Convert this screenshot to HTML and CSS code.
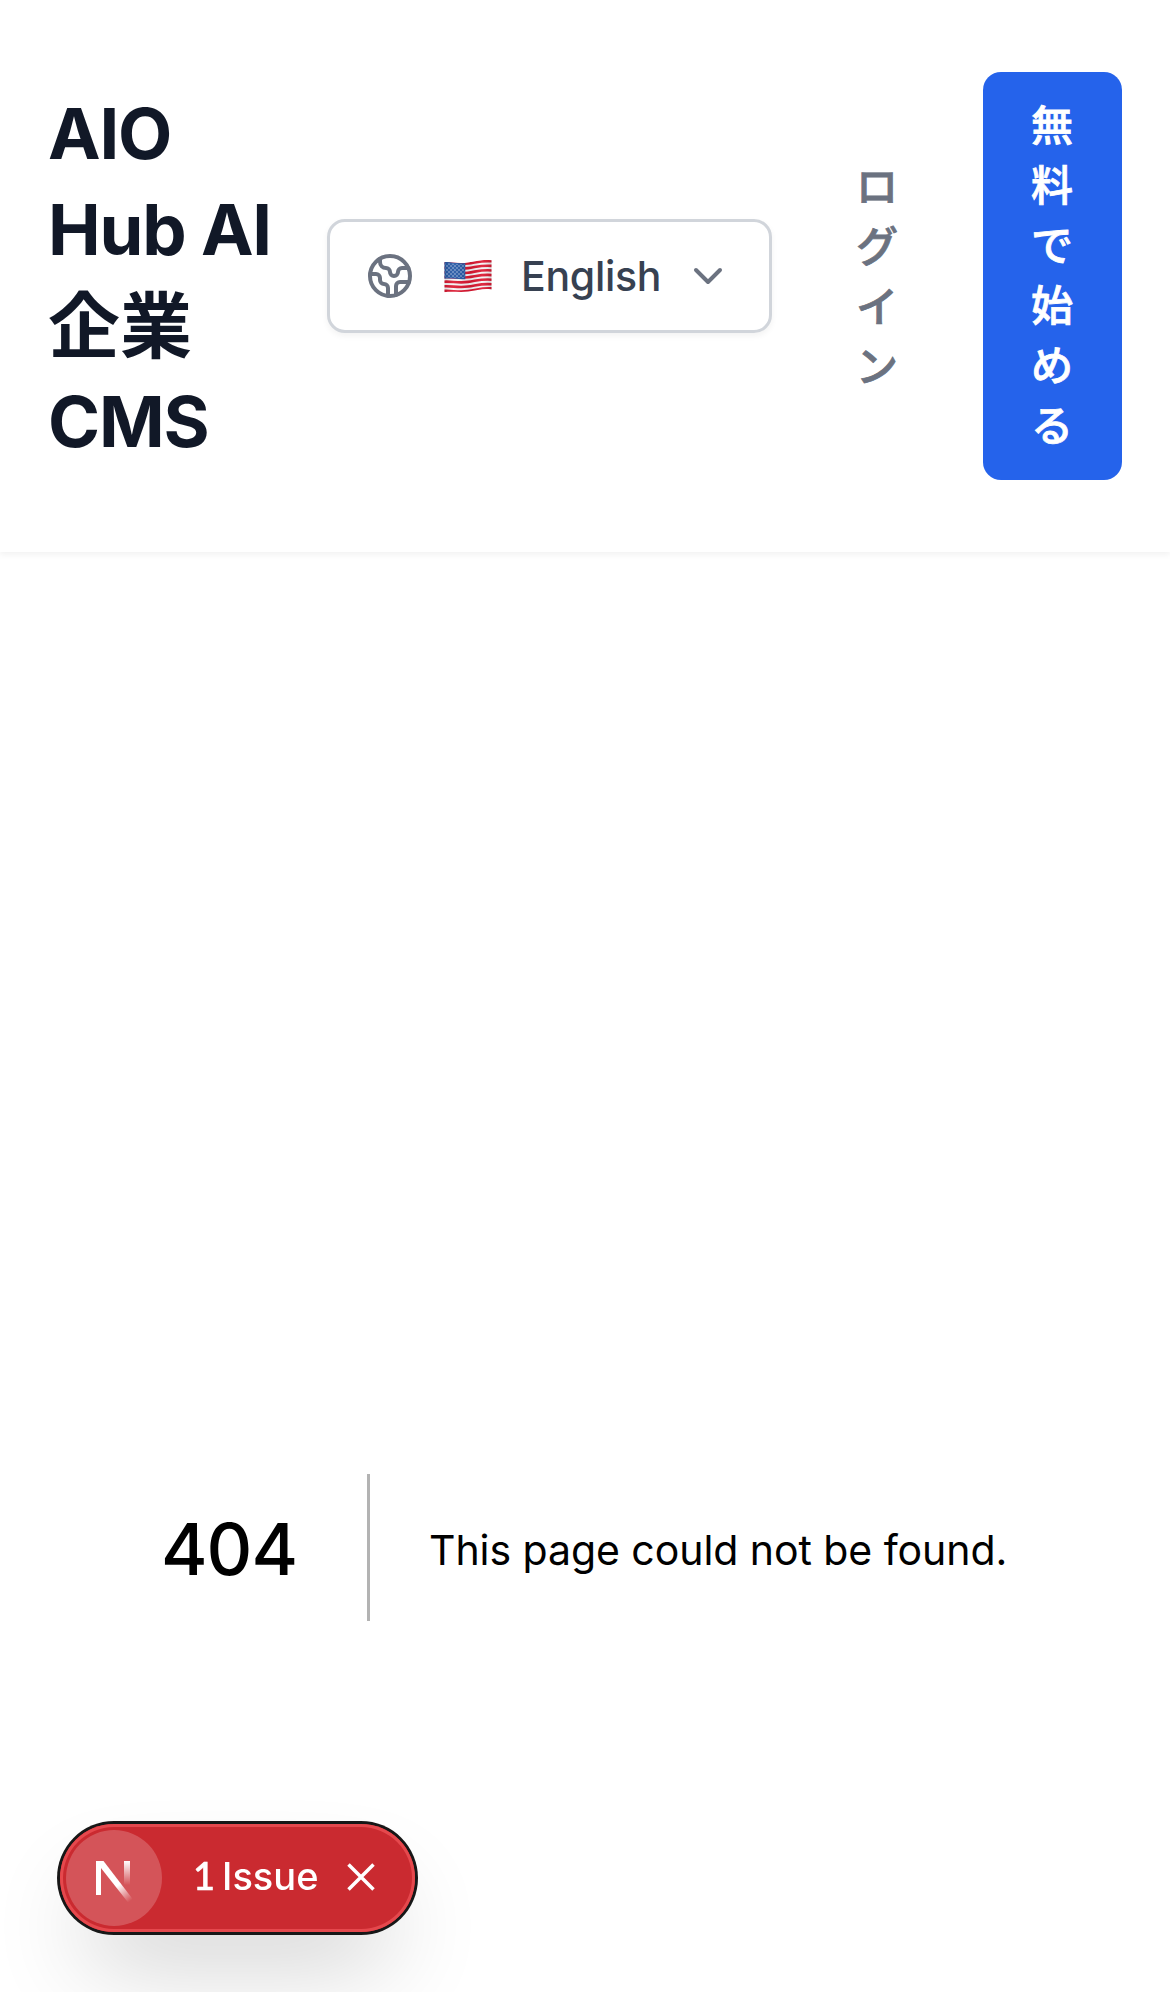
FILE: index.html
```html
<!DOCTYPE html>
<html lang="ja">
<head>
<meta charset="utf-8">
<title>AIO Hub AI企業CMS</title>
<link rel="stylesheet" href="styles.css">
</head>
<body>
<header class="header">
  <h1 class="brand">AIO<br>Hub AI<br><span class="brand-ja">企業</span><br>CMS</h1>
  <button class="language" type="button">
    <svg class="icon" viewBox="0 0 24 24" aria-hidden="true">
      <path d="M21.54 15H17a2 2 0 0 0-2 2v4.54"/>
      <path d="M7 3.34V5a3 3 0 0 0 3 3a2 2 0 0 1 2 2c0 1.1.9 2 2 2a2 2 0 0 0 2-2c0-1.1.9-2 2-2h3.17"/>
      <path d="M11 21.95V18a2 2 0 0 0-2-2a2 2 0 0 1-2-2v-1a2 2 0 0 0-2-2H2.05"/>
      <circle cx="12" cy="12" r="10"/>
    </svg>
    <svg class="flag" viewBox="0 0 48 34" aria-hidden="true">
      <defs>
        <clipPath id="wave"><path d="M.5 3.2C8 2.6 14 5 24 3.4S39 .2 47.5 1.2V30.400C39 29 33 31.500 24 32.600S8 32 .5 33.200Z"/></clipPath>
        <pattern id="stars" width="4" height="4" patternUnits="userSpaceOnUse"><circle cx="1" cy="1" r=".75" fill="#b5c8e4"/><circle cx="3" cy="3" r=".75" fill="#b5c8e4"/></pattern>
        <linearGradient id="shade"><stop offset="0" stop-color="#000" stop-opacity=".12"/><stop offset=".2" stop-color="#fff" stop-opacity=".08"/><stop offset=".55" stop-color="#000" stop-opacity=".08"/><stop offset=".8" stop-color="#fff" stop-opacity=".08"/><stop offset="1" stop-color="#000" stop-opacity=".15"/></linearGradient>
      </defs>
      <g clip-path="url(#wave)">
        <path fill="#f6f4f5" d="M0 0h48v34H0z"/>
        <g fill="none" stroke="#dc1730" stroke-width="2.600">
          <path d="M0 4.3C8 3.700 14 6 24 4.500S39 1.300 48 2.300"/>
          <path d="M0 8.900C8 8.300 14 10.600 24 9.100S39 5.900 48 6.900"/>
          <path d="M0 13.500C8 12.900 14 15.200 24 13.700S39 10.500 48 11.500"/>
          <path d="M0 18.100C8 17.500 14 19.800 24 18.300S39 15.100 48 16.100"/>
          <path d="M0 22.700C8 22.100 14 24.400 24 22.900S39 19.700 48 20.700"/>
          <path d="M0 27.300C8 26.700 14 29 24 27.500S39 24.300 48 25.300"/>
          <path d="M0 31.900C8 31.300 14 33.600 24 32.100S39 28.400 48 29.400"/>
        </g>
        <path fill="#2457a5" d="M0 2.800C8 2.600 14 5 21.300 4V20.200C14 20.700 8 19 0 19.800Z"/>
        <path fill="url(#stars)" d="M1.500 4C8 4 14 6 20.500 5V19C14 19.500 8 18 1.500 18.500Z"/>
        <path fill="url(#shade)" d="M0 0h48v34H0z"/>
      </g>
    </svg>
    <span class="language-name">English</span>
    <svg class="icon chevron" viewBox="0 0 24 24" aria-hidden="true"><path d="m6 9 6 6 6-6"/></svg>
  </button>
  <nav class="actions">
    <a class="login">ログイン</a>
    <a class="signup">無料で始める</a>
  </nav>
</header>
<main class="error">
  <h2 class="error-code">404</h2>
  <p class="error-text">This page could not be found.</p>
</main>
<aside class="issues">
  <span class="issues-logo">
    <svg class="next-mark" viewBox="0 0 42 48" aria-hidden="true">
      <defs>
        <linearGradient id="diagonal" gradientUnits="userSpaceOnUse" x1="24" y1="28" x2="36" y2="44"><stop stop-color="#fff"/><stop offset="1" stop-color="#fff" stop-opacity="0"/></linearGradient>
        <linearGradient id="stem" x1="0" y1="0" x2="0" y2="1"><stop stop-color="#fff"/><stop offset="1" stop-color="#fff" stop-opacity="0"/></linearGradient>
      </defs>
      <path fill="#fff" d="M3 3h5v34H3z"/>
      <path fill="url(#diagonal)" d="M3 3h7.500L40 41.500 35.500 45 4 5Z"/>
      <path fill="url(#stem)" d="M31 3h6v24h-6z"/>
    </svg>
  </span>
  <span class="issues-label"><span class="issues-count">1</span><span>Issue</span></span>
  <svg class="close" viewBox="0 0 28 28" aria-hidden="true"><path d="M1.500 1.500l25 25M26.500 1.500l-25 25"/></svg>
</aside>
</body>
</html>
```

FILE: styles.css
```css
* {
  box-sizing: border-box;
}

body {
  margin: 0;
  min-height: 1992px;
  display: flex;
  flex-direction: column;
  background: #fff;
  font-family: Inter, "Noto Sans CJK JP", sans-serif;
}

.header {
  display: flex;
  align-items: center;
  height: 552px;
  padding: 72px 48px;
  box-shadow: 0 3px 6px rgba(0, 0, 0, 0.05);
}

.brand {
  width: 279px;
  margin: 0;
  padding-top: 4px;
  color: #111827;
  font-size: 70.5px;
  font-weight: 700;
  line-height: 96px;
  letter-spacing: -1.2px;
  white-space: nowrap;
}

.brand-ja {
  font-family: "Noto Sans CJK JP", sans-serif;
  font-size: 72px;
  line-height: 1;
  letter-spacing: 0;
  vertical-align: -1px;
}

.language {
  display: flex;
  align-items: center;
  width: 445px;
  height: 114px;
  padding: 0 37px 0 36px;
  border: 3px solid #d1d5db;
  border-radius: 18px;
  background: #fff;
  box-shadow: 0 3px 6px rgba(0, 0, 0, 0.05);
  color: #374151;
  font: 450 41px/60px Inter, sans-serif;
}

.icon {
  width: 48px;
  height: 48px;
  fill: none;
  stroke: #6b7280;
  stroke-width: 2;
  stroke-linecap: round;
  stroke-linejoin: round;
}

.flag {
  width: 48px;
  height: 34px;
  margin: 0 29.5px 1px 29.5px;
}

.language-name {
  letter-spacing: -0.3px;
}

.chevron {
  margin-left: auto;
}

.actions {
  display: flex;
  flex: 1;
  align-items: center;
  justify-content: space-between;
  padding-left: 84px;
  font: 500 42px/60px "Noto Sans CJK JP", sans-serif;
  -webkit-text-stroke: 0.8px;
}

.login {
  width: 42px;
  padding-bottom: 5px;
  color: #6b7280;
  word-break: break-all;
}

.signup {
  width: 139px;
  padding: 21px 48px 27px;
  border-radius: 18px;
  background: #2563eb;
  color: #fff;
  word-break: break-all;
}

.error {
  display: flex;
  align-items: center;
  height: 147px;
  margin-top: 922px;
  padding-left: 161px;
  color: #000;
}

.error-code {
  width: 209px;
  margin: 0 59px 0 0;
  padding-top: 3px;
  border-right: 3px solid #b3b3b3;
  font-size: 71px;
  font-weight: 540;
  line-height: 144px;
  letter-spacing: -1px;
}

.error-text {
  margin: 0;
  padding-top: 4px;
  font-size: 41px;
  line-height: 84px;
  letter-spacing: -0.06px;
}

.issues {
  position: fixed;
  left: 60px;
  bottom: 60px;
  display: flex;
  align-items: center;
  width: 355px;
  height: 108px;
  padding: 6px;
  border-radius: 54px;
  background: #ca2a30;
  box-shadow: 0 0 0 3px #171717, inset 0 0 0 3px #e5484d, 0 48px 96px -24px rgba(0, 0, 0, 0.24);
  color: #fff;
  font-size: 38px;
  font-weight: 500;
}

.issues-logo {
  display: flex;
  width: 96px;
  height: 96px;
  border-radius: 50%;
  background: rgba(255, 255, 255, 0.2);
}

.next-mark {
  width: 42px;
  height: 48px;
  margin: 28px 0 0 27px;
}

.issues-label {
  display: flex;
  align-items: baseline;
  gap: 7px;
  margin-left: 31px;
  padding-bottom: 5px;
}

.issues-count {
  font-family: Lato, sans-serif;
  font-weight: 500;
  -webkit-text-stroke: 0.6px;
}

.close {
  width: 28px;
  height: 28px;
  margin-left: auto;
  margin-right: 34px;
  margin-bottom: 2px;
  stroke: #fff;
  stroke-width: 3.5;
}
```
